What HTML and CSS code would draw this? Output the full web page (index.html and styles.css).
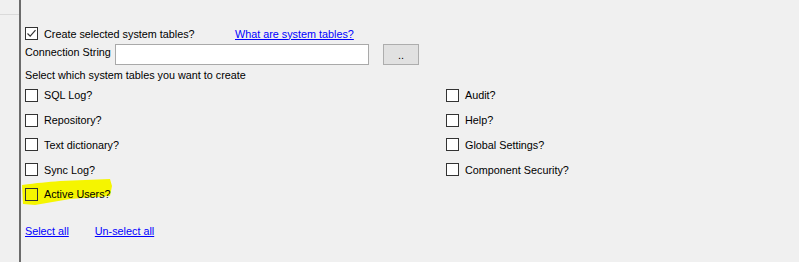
FILE: index.html
```html
<!DOCTYPE html>
<html lang="en">
<head>
    <meta charset="UTF-8">
    <title>System Tables</title>
    <link rel="stylesheet" href="styles.css">
</head>
<body>
    <div class="sideStrip">
        <div class="sideLine"></div>
    </div>

    <div class="panel">
        <div class="topRow">
            <label class="option createOption">
                <span class="box checked">
                    <svg width="11" height="11" viewBox="0 0 11 11"><path d="M1.5 5.5 L4.2 8.2 L9.5 2.2" fill="none" stroke="#333" stroke-width="1.2"/></svg>
                </span>
                <span class="optText">Create selected system tables?</span>
            </label>
            <a href="#" class="link">What are system tables?</a>
        </div>

        <div class="connRow">
            <span class="connLabel">Connection String</span>
            <input type="text" class="connInput">
            <button class="dotsBtn">..</button>
        </div>

        <div class="hint">Select which system tables you want to create</div>

        <div class="tableGrid">
            <label class="option"><span class="box"></span><span class="optText">SQL Log?</span></label>
            <label class="option"><span class="box"></span><span class="optText">Audit?</span></label>
            <label class="option"><span class="box"></span><span class="optText">Repository?</span></label>
            <label class="option"><span class="box"></span><span class="optText">Help?</span></label>
            <label class="option"><span class="box"></span><span class="optText">Text dictionary?</span></label>
            <label class="option"><span class="box"></span><span class="optText">Global Settings?</span></label>
            <label class="option"><span class="box"></span><span class="optText">Sync Log?</span></label>
            <label class="option"><span class="box"></span><span class="optText">Component Security?</span></label>
            <label class="option">
                <svg class="marker" width="90" height="27" viewBox="0 0 90 27"><path d="M0 6 C15 4 25 3 38 2 L88 0 L90 7 L88 17 L48 20 L13 26 L1 25 Z" fill="#f5f500"/></svg>
                <span class="box yellowBox"></span><span class="optText">Active Users?</span>
            </label>
        </div>

        <div class="links">
            <a href="#" class="link">Select all</a>
            <a href="#" class="link">Un-select all</a>
        </div>
    </div>
</body>
</html>
```

FILE: styles.css
```css
*{
    box-sizing: border-box;
}
body{
    margin: 0;
    width: 799px;
    height: 262px;
    overflow: hidden;
    display: flex;
    background-color: #f0f0f0;
    font-family: "Liberation Sans", Arial, sans-serif;
    font-size: 10.8px;
    color: #000;
}
.sideStrip{
    width: 21px;
    border-right: 2px solid #6b6b6b;
}
.sideLine{
    height: 15px;
    border-bottom: 1px solid #dadada;
}
.panel{
    flex: 1;
    padding: 25px 0 0 4px;
}
.option{
    display: flex;
    align-items: center;
    position: relative;
}
.optText{
    position: relative;
}
.box{
    width: 13px;
    height: 13px;
    border: 1px solid #333;
    background-color: #fff;
    margin-right: 6px;
    display: flex;
    align-items: center;
    justify-content: center;
    position: relative;
}
.topRow{
    display: flex;
    align-items: center;
    height: 17px;
}
.createOption{
    width: 210px;
}
.link{
    color: #0000ff;
    text-decoration: underline;
}
.connRow{
    display: flex;
    margin-top: 2px;
    height: 21px;
}
.connLabel{
    width: 90px;
    padding-top: 2px;
}
.connInput{
    width: 254px;
    height: 21px;
    border: 1px solid #a9a9a9;
    background-color: #fff;
    margin: 0;
}
.dotsBtn{
    width: 36px;
    height: 21px;
    margin-left: 14px;
    border: 1px solid #adadad;
    background-color: #e1e1e1;
    font-family: "Liberation Sans", Arial, sans-serif;
    font-size: 10.8px;
    padding: 0;
}
.hint{
    margin-top: 4px;
    line-height: 13px;
}
.tableGrid{
    display: grid;
    grid-template-columns: 421px auto;
    grid-auto-rows: 24.75px;
    margin-top: 1px;
}
.marker{
    position: absolute;
    left: -3px;
    top: -3px;
}
.yellowBox{
    background-color: #f5f500;
}
.links{
    margin-top: 18px;
    display: flex;
    gap: 26px;
    line-height: 13px;
}
```
